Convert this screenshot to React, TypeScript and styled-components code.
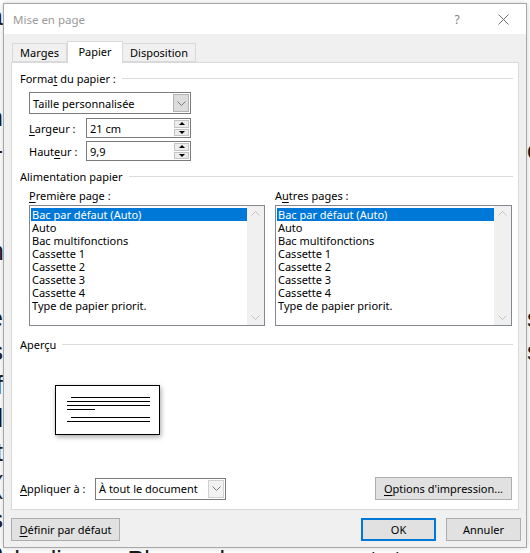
import styled, { createGlobalStyle } from "styled-components";

/* ── Globals ─────────────────────────────────────────────── */

const GlobalStyle = createGlobalStyle`
  html, body {
    margin: 0;
    padding: 0;
  }
  body {
    width: 530px;
    height: 553px;
    overflow: hidden;
    background: #fff;
  }
`;

const ui = `"Noto Sans", "Open Sans", sans-serif`;

/* ── Document behind the dialog ──────────────────────────── */

const Screen = styled.div`
  position: relative;
  width: 530px;
  height: 553px;
  overflow: hidden;
  background: #fff;
`;

// the page text only shows in thin strips round the dialog
const DocStrip = styled.div<{ $side: "left" | "right" }>`
  position: absolute;
  top: 0;
  ${(p) => (p.$side === "left" ? "left: 0;" : "right: 0;")}
  width: 3px;
  height: 553px;
  overflow: hidden;
`;

const DocColumn = styled.div<{ $side: "left" | "right" }>`
  width: 20px;
  margin-left: ${(p) => (p.$side === "left" ? -17 : 0)}px;
  text-align: ${(p) => (p.$side === "left" ? "right" : "left")};
  font-family: "Liberation Sans", Arial, sans-serif;
  font-size: 25px;
  line-height: 33.5px;
  color: #1a1a1a;
`;

const DocBottom = styled.div`
  position: absolute;
  left: 0;
  right: 0;
  top: 548px;
  height: 5px;
  overflow: hidden;
`;

const DocLine = styled.div`
  padding-left: 6px;
  white-space: nowrap;
  font-family: "Liberation Sans", Arial, sans-serif;
  font-size: 25px;
  line-height: 25px;
  word-spacing: 10px;
  color: #1a1a1a;
`;

/* ── Dialog frame ────────────────────────────────────────── */

const Dialog = styled.div`
  position: absolute;
  top: 3px;
  left: 3px;
  width: 524px;
  height: 545px;
  box-sizing: border-box;
  border: 1px solid #a8a8a8;
  background: #f0f0f0;
  box-shadow: 0 0 6px rgba(0, 0, 0, 0.18);
  display: flex;
  flex-direction: column;
  font-family: ${ui};
  font-size: 11px;
  color: #000;
`;

const TitleBar = styled.div`
  height: 30px;
  background: #fff;
  display: flex;
  align-items: center;
  padding-left: 9px;
  flex-shrink: 0;
`;

const Title = styled.span`
  flex: 1;
  font-size: 11.5px;
  color: #9a9a9a;
`;

const TitleButton = styled.span`
  width: 46px;
  height: 30px;
  display: flex;
  align-items: center;
  justify-content: center;
  color: #808080;
  font-size: 12px;
`;

const Body = styled.div`
  flex: 1;
  display: flex;
  flex-direction: column;
  padding: 7px 7px 6px 7px;
`;

/* ── Tabs ────────────────────────────────────────────────── */

const TabRow = styled.div`
  height: 21px;
  display: flex;
  align-items: flex-end;
  padding-left: 1px;
  position: relative;
  z-index: 1;
`;

const Tab = styled.div<{ $active?: boolean; $w: number }>`
  width: ${(p) => p.$w}px;
  box-sizing: border-box;
  height: ${(p) => (p.$active ? 22 : 19)}px;
  margin-bottom: ${(p) => (p.$active ? -1 : 0)}px;
  border: 1px solid #d9d9d9;
  border-bottom: ${(p) => (p.$active ? "none" : "1px solid #d9d9d9")};
  margin-left: ${(p) => (p.$active ? 0 : -1)}px;
  background: ${(p) => (p.$active ? "#fff" : "#f0f0f0")};
  display: flex;
  align-items: ${(p) => (p.$active ? "flex-start" : "center")};
  padding-top: ${(p) => (p.$active ? 2 : 0)}px;
  justify-content: center;
  &:first-child {
    margin-left: 0;
  }
`;

const Panel = styled.div`
  flex: 1;
  background: #fff;
  border: 1px solid #d9d9d9;
  display: flex;
  flex-direction: column;
  padding: 7px 5px 9px 8px;
`;

/* ── Panel parts ─────────────────────────────────────────── */

const GroupHeader = styled.div<{ $top?: number }>`
  height: 16px;
  margin-top: ${(p) => p.$top ?? 0}px;
  display: flex;
  align-items: center;
  gap: 6px;
  &::after {
    content: "";
    flex: 1;
    border-top: 1px solid #dcdcdc;
  }
`;

const Indent = styled.div`
  margin-left: 9px;
  display: flex;
  flex-direction: column;
`;

const Key = styled.span`
  text-decoration: underline;
  text-underline-offset: 2px;
`;

const Combo = styled.div<{ $w: number; $top?: number }>`
  width: ${(p) => p.$w}px;
  height: 22px;
  margin-top: ${(p) => p.$top ?? 0}px;
  box-sizing: border-box;
  border: 1px solid #7a7a7a;
  background: #fff;
  display: flex;
  align-items: stretch;
`;

const ComboText = styled.div`
  flex: 1;
  display: flex;
  align-items: center;
  padding-left: 3px;
`;

const ComboButton = styled.div<{ $hot?: boolean }>`
  width: 16px;
  margin: 1px;
  box-sizing: border-box;
  background: ${(p) => (p.$hot ? "#dcdcdc" : "#f2f2f2")};
  border: 1px solid ${(p) => (p.$hot ? "#b4b4b4" : "#d0d0d0")};
  display: flex;
  align-items: center;
  justify-content: center;
`;

const FieldRow = styled.div<{ $top: number }>`
  display: flex;
  align-items: center;
  margin-top: ${(p) => p.$top}px;
`;

const FieldLabel = styled.div<{ $w: number }>`
  width: ${(p) => p.$w}px;
  flex-shrink: 0;
`;

const SpinBox = styled.div`
  width: 105px;
  height: 20px;
  box-sizing: border-box;
  border: 1px solid #7a7a7a;
  display: flex;
  align-items: stretch;
`;

const SpinText = styled.div`
  flex: 1;
  display: flex;
  align-items: center;
  padding-left: 3px;
`;

const SpinButtons = styled.div`
  width: 15px;
  margin: 1px 1px 1px 0;
  display: flex;
  flex-direction: column;
  gap: 1px;
`;

const SpinHalf = styled.div<{ $down?: boolean }>`
  flex: 1;
  background: #ececec;
  border: 1px solid #c4c4c4;
  display: flex;
  align-items: center;
  justify-content: center;
  &::before {
    content: "";
    border-left: 3px solid transparent;
    border-right: 3px solid transparent;
    ${(p) =>
      p.$down ? "border-top: 3px solid #000;" : "border-bottom: 3px solid #000;"}
  }
`;

const ListsGrid = styled.div`
  display: grid;
  grid-template-columns: 236px 237px;
  column-gap: 10px;
  margin-top: 4px;
`;

const ListColumn = styled.div`
  display: flex;
  flex-direction: column;
`;

const ListLabel = styled.div`
  height: 16px;
  line-height: 16px;
  margin-bottom: 1px;
`;

const ListBox = styled.div`
  height: 121px;
  box-sizing: border-box;
  border: 1px solid #828790;
  display: flex;
`;

const ListItems = styled.div`
  flex: 1;
  padding: 2px 0 0 1px;
`;

const ListItem = styled.div<{ $selected?: boolean }>`
  height: 13px;
  line-height: 13px;
  padding-left: 1px;
  white-space: nowrap;
  background: ${(p) => (p.$selected ? "#0078d7" : "transparent")};
  color: ${(p) => (p.$selected ? "#fff" : "#000")};
`;

const ScrollBar = styled.div`
  width: 17px;
  background: #f0f0f0;
  display: flex;
  flex-direction: column;
  justify-content: space-between;
  align-items: center;
  padding: 5px 0;
`;

const Preview = styled.div`
  margin: 33px 0 0 35px;
  width: 105px;
  height: 50px;
  box-sizing: border-box;
  border: 1px solid #000;
  background: #fff;
  box-shadow: 1px 2px 5px rgba(0, 0, 0, 0.35);
`;

const ApplyRow = styled.div`
  margin-top: auto;
  display: flex;
  align-items: center;
  padding-right: 1px;
`;

const Button = styled.button<{ $w: number; $default?: boolean }>`
  width: ${(p) => p.$w}px;
  height: 23px;
  box-sizing: border-box;
  padding: 0;
  font-family: ${ui};
  font-size: 11px;
  color: #000;
  background: #e1e1e1;
  border: ${(p) => (p.$default ? "2px solid #0078d7" : "1px solid #adadad")};
`;

const ButtonRow = styled.div`
  display: flex;
  align-items: center;
  gap: 10px;
  margin: 8px -2px 0 0;
`;

const Spacer = styled.div`
  flex: 1;
`;

/* ── Drawings ────────────────────────────────────────────── */

const Chevron = ({ up, color = "#7a7a7a" }: { up?: boolean; color?: string }) => (
  <svg width="9" height="5" viewBox="0 0 9 5">
    <path
      d={up ? "M0.5 4.5 L4.5 0.5 L8.5 4.5" : "M0.5 0.5 L4.5 4.5 L8.5 0.5"}
      fill="none"
      stroke={color}
      strokeWidth="1"
    />
  </svg>
);

const CloseIcon = () => (
  <svg width="11" height="11" viewBox="0 0 11 11">
    <path d="M0.5 0.5 L10.5 10.5 M10.5 0.5 L0.5 10.5" stroke="#707070" strokeWidth="1" />
  </svg>
);

const PageLines = () => (
  <svg width="103" height="48" viewBox="0 0 103 48">
    <g stroke="#000" strokeWidth="1">
      <line x1="15" y1="11.5" x2="94" y2="11.5" />
      <line x1="11" y1="15.5" x2="94" y2="15.5" />
      <line x1="11" y1="19.5" x2="94" y2="19.5" />
      <line x1="11" y1="23.5" x2="39" y2="23.5" />
      <line x1="15" y1="31.5" x2="94" y2="31.5" />
      <line x1="11" y1="35.5" x2="94" y2="35.5" />
    </g>
  </svg>
);

/* ── Data ────────────────────────────────────────────────── */

const trays = [
  "Bac par défaut (Auto)",
  "Auto",
  "Bac multifonctions",
  "Cassette 1",
  "Cassette 2",
  "Cassette 3",
  "Cassette 4",
  "Type de papier priorit.",
];

// last letters of each page line, cut by the dialog edges
const leftEnds = ["a", "", "", "n", "-", "", "", "m", "", "e", "s", "f", "l", "t", "(", "s", "e"];
const rightStarts = ["", "", "", "", "e", "", "", "", "", "s", "s", "", "", "", "", "", ""];

function TrayList({ label }: { label: React.ReactNode }) {
  return (
    <ListColumn>
      <ListLabel>{label}</ListLabel>
      <ListBox>
        <ListItems>
          {trays.map((t, i) => (
            <ListItem key={t} $selected={i === 0}>
              {t}
            </ListItem>
          ))}
        </ListItems>
        <ScrollBar>
          <Chevron up color="#c2c2c2" />
          <Chevron color="#c2c2c2" />
        </ScrollBar>
      </ListBox>
    </ListColumn>
  );
}

/* ── Component ───────────────────────────────────────────── */

export default function App() {
  return (
    <Screen>
      <GlobalStyle />
      <DocStrip $side="left">
        <DocColumn $side="left">
          {leftEnds.map((c, i) => (
            <div key={i}>{c || "\u00a0"}</div>
          ))}
        </DocColumn>
      </DocStrip>
      <DocStrip $side="right">
        <DocColumn $side="right">
          {rightStarts.map((c, i) => (
            <div key={i}>{c || "\u00a0"}</div>
          ))}
        </DocColumn>
      </DocStrip>
      <DocBottom>
        <DocLine>de ligne. Placez le curseur et tapez</DocLine>
      </DocBottom>

      <Dialog>
        <TitleBar>
          <Title>Mise en page</Title>
          <TitleButton>?</TitleButton>
          <TitleButton>
            <CloseIcon />
          </TitleButton>
        </TitleBar>

        <Body>
          <TabRow>
            <Tab $w={55}>Marges</Tab>
            <Tab $w={56} $active>
              Papier
            </Tab>
            <Tab $w={74}>Disposition</Tab>
          </TabRow>

          <Panel>
            <GroupHeader>
              <span>
                Forma<Key>t</Key> du papier :
              </span>
            </GroupHeader>
            <Indent>
              <Combo $w={162} $top={6}>
                <ComboText>Taille personnalisée</ComboText>
                <ComboButton $hot>
                  <Chevron />
                </ComboButton>
              </Combo>
              <FieldRow $top={4}>
                <FieldLabel $w={57}>
                  <Key>L</Key>argeur :
                </FieldLabel>
                <SpinBox>
                  <SpinText>21 cm</SpinText>
                  <SpinButtons>
                    <SpinHalf />
                    <SpinHalf $down />
                  </SpinButtons>
                </SpinBox>
              </FieldRow>
              <FieldRow $top={3}>
                <FieldLabel $w={57}>
                  Haut<Key>e</Key>ur :
                </FieldLabel>
                <SpinBox>
                  <SpinText>9,9</SpinText>
                  <SpinButtons>
                    <SpinHalf />
                    <SpinHalf $down />
                  </SpinButtons>
                </SpinBox>
              </FieldRow>
            </Indent>

            <GroupHeader $top={7}>
              <span>Alimentation papier</span>
            </GroupHeader>
            <Indent>
              <ListsGrid>
                <TrayList
                  label={
                    <>
                      <Key>P</Key>remière page :
                    </>
                  }
                />
                <TrayList
                  label={
                    <>
                      A<Key>u</Key>tres pages :
                    </>
                  }
                />
              </ListsGrid>
            </Indent>

            <GroupHeader $top={10}>
              <span>Aperçu</span>
            </GroupHeader>
            <Preview>
              <PageLines />
            </Preview>

            <ApplyRow>
              <FieldLabel $w={75}>
                <Key>A</Key>ppliquer à :
              </FieldLabel>
              <Combo $w={131}>
                <ComboText>À tout le document</ComboText>
                <ComboButton>
                  <Chevron />
                </ComboButton>
              </Combo>
              <Spacer />
              <Button $w={137}>
                <Key>O</Key>ptions d'impression...
              </Button>
            </ApplyRow>
          </Panel>

          <ButtonRow>
            <Button $w={109}>
              <Key>D</Key>éfinir par défaut
            </Button>
            <Spacer />
            <Button $w={75} $default>
              OK
            </Button>
            <Button $w={75}>Annuler</Button>
          </ButtonRow>
        </Body>
      </Dialog>
    </Screen>
  );
}
